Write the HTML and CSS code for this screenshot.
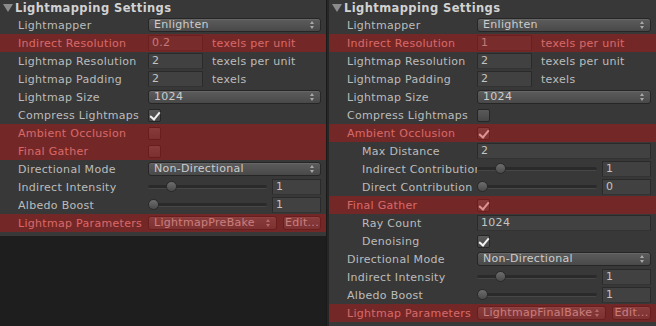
FILE: index.html
```html
<!DOCTYPE html>
<html lang="en">
<head>
  <meta charset="UTF-8">
  <title>Lightmapping Settings</title>
  <link rel="stylesheet" href="styles.css">
</head>
<body>

<div class="window">

  <!-- pre-bake settings -->
  <section class="panel panel-left">
    <div class="header"><span class="fold"></span>Lightmapping Settings</div>

    <div class="row"><span class="label">Lightmapper</span>
      <div class="popup">Enlighten<span class="arrows"></span></div></div>

    <div class="row hl"><span class="label">Indirect Resolution</span>
      <div class="field">0.2</div><span class="unit">texels per unit</span></div>

    <div class="row"><span class="label">Lightmap Resolution</span>
      <div class="field">2</div><span class="unit">texels per unit</span></div>

    <div class="row"><span class="label">Lightmap Padding</span>
      <div class="field">2</div><span class="unit">texels</span></div>

    <div class="row"><span class="label">Lightmap Size</span>
      <div class="popup">1024<span class="arrows"></span></div></div>

    <div class="row"><span class="label">Compress Lightmaps</span>
      <div class="toggle on"></div></div>

    <div class="row hl"><span class="label">Ambient Occlusion</span>
      <div class="toggle"></div></div>

    <div class="row hl"><span class="label">Final Gather</span>
      <div class="toggle"></div></div>

    <div class="row"><span class="label">Directional Mode</span>
      <div class="popup">Non-Directional<span class="arrows"></span></div></div>

    <div class="row"><span class="label">Indirect Intensity</span>
      <div class="slider"><div class="track"></div><div class="thumb" style="left: 15%"></div></div>
      <div class="field num">1</div></div>

    <div class="row"><span class="label">Albedo Boost</span>
      <div class="slider"><div class="track"></div><div class="thumb" style="left: 0%"></div></div>
      <div class="field num">1</div></div>

    <div class="row hl"><span class="label">Lightmap Parameters</span>
      <div class="popup short">LightmapPreBake<span class="arrows"></span></div>
      <div class="button">Edit...</div></div>
  </section>

  <div class="divider"></div>

  <!-- final bake settings -->
  <section class="panel">
    <div class="header"><span class="fold"></span>Lightmapping Settings</div>

    <div class="row"><span class="label">Lightmapper</span>
      <div class="popup">Enlighten<span class="arrows"></span></div></div>

    <div class="row hl"><span class="label">Indirect Resolution</span>
      <div class="field">1</div><span class="unit">texels per unit</span></div>

    <div class="row"><span class="label">Lightmap Resolution</span>
      <div class="field">2</div><span class="unit">texels per unit</span></div>

    <div class="row"><span class="label">Lightmap Padding</span>
      <div class="field">2</div><span class="unit">texels</span></div>

    <div class="row"><span class="label">Lightmap Size</span>
      <div class="popup">1024<span class="arrows"></span></div></div>

    <div class="row"><span class="label">Compress Lightmaps</span>
      <div class="toggle"></div></div>

    <div class="row hl"><span class="label">Ambient Occlusion</span>
      <div class="toggle on"></div></div>

    <div class="row sub"><span class="label">Max Distance</span>
      <div class="field wide">2</div></div>

    <div class="row sub"><span class="label">Indirect Contribution</span>
      <div class="slider"><div class="track"></div><div class="thumb" style="left: 15%"></div></div>
      <div class="field num">1</div></div>

    <div class="row sub"><span class="label">Direct Contribution</span>
      <div class="slider"><div class="track"></div><div class="thumb" style="left: 0%"></div></div>
      <div class="field num">0</div></div>

    <div class="row hl"><span class="label">Final Gather</span>
      <div class="toggle on"></div></div>

    <div class="row sub"><span class="label">Ray Count</span>
      <div class="field wide">1024</div></div>

    <div class="row sub"><span class="label">Denoising</span>
      <div class="toggle on"></div></div>

    <div class="row"><span class="label">Directional Mode</span>
      <div class="popup">Non-Directional<span class="arrows"></span></div></div>

    <div class="row"><span class="label">Indirect Intensity</span>
      <div class="slider"><div class="track"></div><div class="thumb" style="left: 15%"></div></div>
      <div class="field num">1</div></div>

    <div class="row"><span class="label">Albedo Boost</span>
      <div class="slider"><div class="track"></div><div class="thumb" style="left: 0%"></div></div>
      <div class="field num">1</div></div>

    <div class="row hl"><span class="label">Lightmap Parameters</span>
      <div class="popup short">LightmapFinalBake<span class="arrows"></span></div>
      <div class="button">Edit...</div></div>
  </section>

</div>

</body>
</html>
```

FILE: styles.css
```css
* {
  box-sizing: border-box;
}
body {
  margin: 0;
  background-color: #1e1e1e;
  font-family: "DejaVu Sans", Verdana, sans-serif;
  font-size: 11px;
  letter-spacing: 0.3px;
  color: #bcbcbc;
}
.window {
  display: flex;
  align-items: flex-start;
  width: 656px;
  height: 326px;
}
.panel {
  background-color: #383838;
  padding-bottom: 4px;
  width: 327px;
}
.panel-left {
  width: 326px;
}
.divider {
  width: 3px;
  height: 326px;
  background-color: #262626;
  border-left: 1px solid #1a1a1a;
}
.header {
  display: flex;
  align-items: center;
  height: 16px;
  padding-left: 3px;
  font-weight: bold;
  font-size: 11.5px;
  color: #d2d2d2;
  letter-spacing: 0.4px;
}
.fold {
  width: 0;
  height: 0;
  border-left: 5px solid transparent;
  border-right: 5px solid transparent;
  border-top: 8px solid #8c8c8c;
  margin-right: 2px;
}
.row {
  position: relative;
  display: flex;
  align-items: center;
  height: 18px;
  padding-left: 18px;
  padding-right: 5px;
}
.row.hl {
  color: #e2a8a8;
}
.row.hl::after {
  content: "";
  position: absolute;
  left: 0;
  top: 0;
  right: 0;
  bottom: 0;
  background-color: rgba(200, 16, 16, 0.42);
  pointer-events: none;
}
.label {
  flex: none;
  width: 130px;
  overflow: hidden;
  white-space: nowrap;
}
.row.sub .label {
  padding-left: 15px;
}
.popup {
  position: relative;
  flex: 1;
  height: 14px;
  line-height: 12px;
  padding-left: 5px;
  border: 1px solid #262626;
  border-radius: 3px;
  background: linear-gradient(#5c5c5c, #494949);
  color: #cccccc;
  box-shadow: inset 0 1px 0 rgba(255,255,255,0.08);
}
.popup.short {
  flex: none;
  width: 129px;
  margin-right: 6px;
}
.arrows::before,
.arrows::after {
  content: "";
  position: absolute;
  right: 6px;
  width: 0;
  height: 0;
  border-left: 2.5px solid transparent;
  border-right: 2.5px solid transparent;
}
.arrows::before {
  top: 2px;
  border-bottom: 3px solid #a8a8a8;
}
.arrows::after {
  top: 7px;
  border-top: 3px solid #a8a8a8;
}
.button {
  flex: 1;
  height: 14px;
  line-height: 12px;
  text-align: center;
  border: 1px solid #262626;
  border-radius: 3px;
  background: linear-gradient(#5c5c5c, #494949);
  color: #cccccc;
  box-shadow: inset 0 1px 0 rgba(255,255,255,0.08);
}
.field {
  flex: none;
  width: 55px;
  height: 16px;
  line-height: 14px;
  padding-left: 3px;
  background-color: #414141;
  border: 1px solid #2a2a2a;
  border-bottom-color: #333;
  color: #c4c4c4;
}
.field.wide {
  flex: 1;
}
.field.num {
  width: 49px;
  margin-left: 5px;
}
.unit {
  margin-left: 9px;
}
.toggle {
  width: 13px;
  height: 13px;
  border: 1px solid #262626;
  border-radius: 2px;
  background: linear-gradient(#5a5a5a, #474747);
  position: relative;
}
.toggle.on::before {
  content: "";
  position: absolute;
  left: 3px;
  top: 0px;
  width: 4px;
  height: 8px;
  border-right: 2px solid #f2f2f2;
  border-bottom: 2px solid #f2f2f2;
  transform: rotate(40deg);
}
.slider {
  position: relative;
  flex: 1;
  height: 12px;
}
.track {
  position: absolute;
  left: 0;
  right: 0;
  top: 4px;
  height: 4px;
  border-radius: 2px;
  background-color: #2a2a2a;
  border-bottom: 1px solid #474747;
}
.thumb {
  position: absolute;
  top: 0;
  width: 11px;
  height: 11px;
  border-radius: 50%;
  border: 1px solid #2a2a2a;
  background: linear-gradient(#6e6e6e, #4a4a4a);
}
```
